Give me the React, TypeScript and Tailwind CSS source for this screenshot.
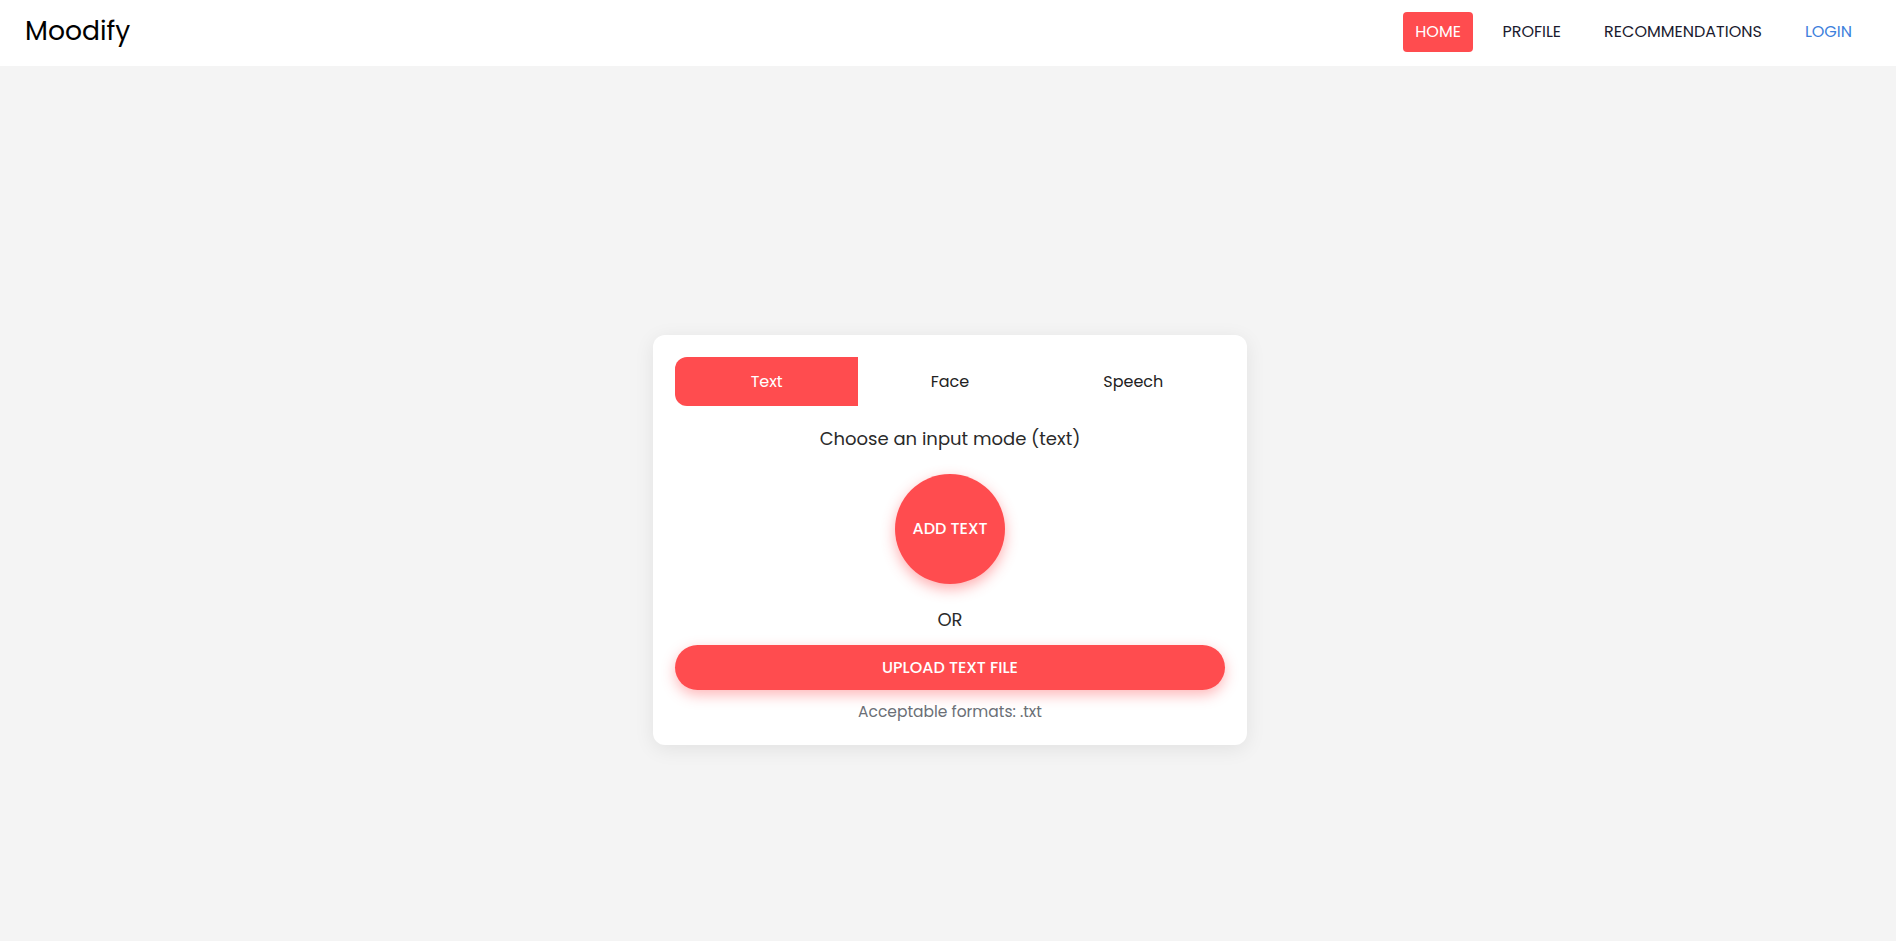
import { useState } from 'react';

const TABS = ['Text', 'Face', 'Speech'];
const NAV = ['HOME', 'PROFILE', 'RECOMMENDATIONS'];

export default function App() {
  const [tab, setTab] = useState('Text');

  return (
    <div className="min-h-screen bg-[#f4f4f4] font-['Poppins','Open_Sans',sans-serif] text-[#222]">
      {/* Navbar */}
      <nav className="h-[66px] bg-white flex items-center justify-between pl-[25px] pr-[32px] pb-[3px]">
        <div className="text-[26.6px] leading-none text-black">Moodify</div>
        <div className="flex items-center gap-[19px]">
          {NAV.map(n => (
            <a
              key={n}
              className={
                n === 'HOME'
                  ? 'h-[40px] px-[12.5px] mr-[-2px] flex items-center rounded-[4px] bg-[#ff4c4f] text-white text-[16px]'
                  : 'h-[40px] px-3 flex items-center text-[16px] text-[#1b1b2f]'
              }
            >
              {n}
            </a>
          ))}
          <a className="h-[40px] px-3 flex items-center text-[16px] text-[#3d7fdc]">LOGIN</a>
        </div>
      </nav>

      {/* Main */}
      <main className="h-[875px] flex justify-center pt-[269px] pl-[4px]">
        <div className="w-[594px] h-[410px] bg-white rounded-xl shadow-[0_4px_20px_rgba(0,0,0,0.08)] p-[22px] flex flex-col items-center">
          <div className="w-full flex rounded-xl overflow-hidden">
            {TABS.map(t => (
              <button
                key={t}
                onClick={() => setTab(t)}
                className={
                  t === tab
                    ? 'flex-1 h-[49px] bg-[#ff4c4f] text-white text-[16px]'
                    : 'flex-1 h-[49px] bg-white text-[#222] text-[16px]'
                }
              >
                {t}
              </button>
            ))}
          </div>

          <p className="mt-[19px] text-[18px] leading-[27px] text-[#2a2a2a]">Choose an input mode ({tab.toLowerCase()})</p>

          <button className="mt-[22px] w-[110px] h-[110px] rounded-full bg-[#ff4c4f] text-white text-[16px] font-medium shadow-[0_5px_14px_rgba(255,76,79,0.45)]">
            ADD TEXT
          </button>

          <p className="mt-[22px] text-[18px] leading-[27px] text-[#2a2a2a]">OR</p>

          <button className="mt-[12px] w-full h-[45px] rounded-full bg-[#ff4c4f] text-white text-[16px] font-medium shadow-[0_5px_14px_rgba(255,76,79,0.4)]">
            UPLOAD TEXT FILE
          </button>

          <p className="mt-[10px] text-[15.5px] leading-[23px] text-[#6b6f76]">Acceptable formats: .txt</p>
        </div>
      </main>
    </div>
  );
}
